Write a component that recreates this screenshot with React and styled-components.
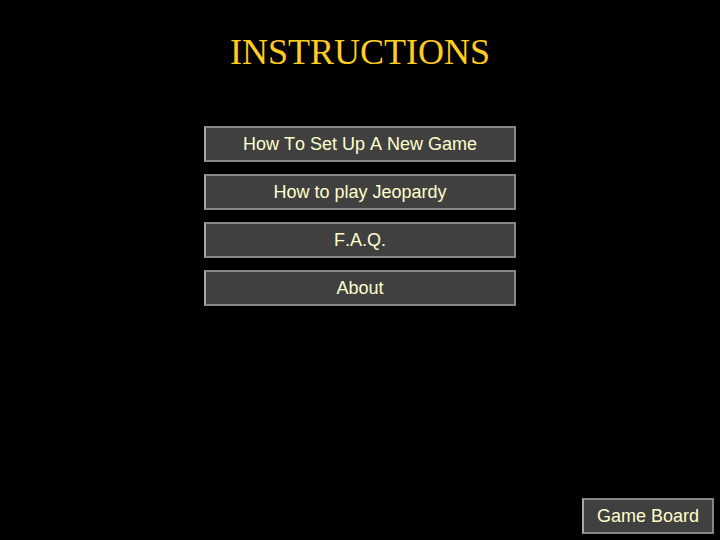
import React from 'react'
import styled, { createGlobalStyle } from 'styled-components'

const GlobalStyle = createGlobalStyle`
  body {
    margin: 0;
    background: #000;
  }
`

const Page = styled.div`
  min-height: 100vh;
  box-sizing: border-box;
  padding: 32px 6px 6px;
  display: flex;
  flex-direction: column;
  align-items: center;
  background: #000;
`

const Title = styled.h1`
  margin: 0;
  font: 400 36px/40px 'Liberation Serif', 'Times New Roman', serif;
  color: #fc2;
`

const Menu = styled.nav`
  width: 312px;
  max-width: 100%;
  margin-top: 54px;
  display: flex;
  flex-direction: column;
  gap: 12px;
`

const Button = styled.button`
  height: 36px;
  padding: 0 13px;
  border: 2px solid #868686;
  border-left-color: #a8a8a8;
  background: #404040;
  color: #ffffcc;
  font: 18px/20px 'Liberation Sans', Arial, sans-serif;
  font-kerning: none;
  cursor: pointer;
`

const Footer = styled.footer`
  margin-top: auto;
  align-self: flex-end;
`

const topics = [
  'How To Set Up A New Game',
  'How to play Jeopardy',
  'F.A.Q.',
  'About',
]

export default function App() {
  return (
    <Page>
      <GlobalStyle />
      <Title>INSTRUCTIONS</Title>
      <Menu>
        {topics.map(topic => (
          <Button key={topic} type="button">{topic}</Button>
        ))}
      </Menu>
      <Footer>
        <Button type="button">Game Board</Button>
      </Footer>
    </Page>
  )
}
